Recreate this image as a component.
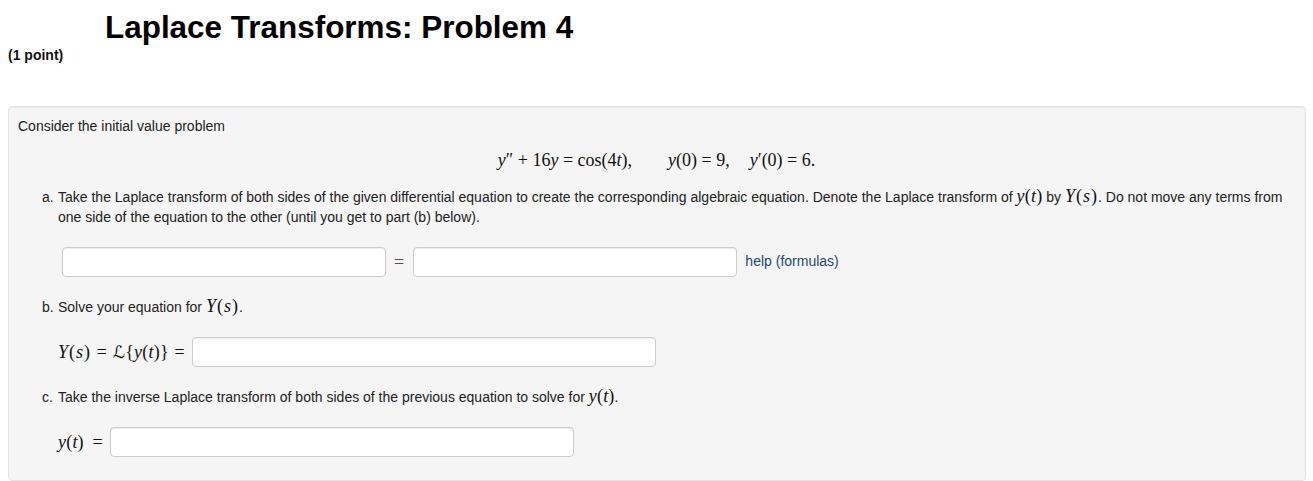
<div class="page">
  <h1>Laplace Transforms: Problem 4</h1>
  <p class="points">(1 point)</p>

  <div class="well">
    <p class="intro">Consider the initial value problem</p>
    <div class="display math">
      <span><i>y</i>″ + 16<i>y</i> = cos(4<i>t</i>),</span>
      <span class="gap-a"><i>y</i>(0) = 9,</span>
      <span class="gap-b"><i>y</i>′(0) = 6.</span>
    </div>

    <div class="part first">
      <span class="marker">a.</span>
      <p>Take the Laplace transform of both sides of the given differential equation to create the corresponding algebraic equation. Denote the Laplace transform of <span class="math"><i>y</i>(<i>t</i>)</span> by <span class="math big"><i>Y</i>(<i>s</i>)</span>. Do not move any terms from one side of the equation to the other (until you get to part (b) below).</p>
    </div>
    <div class="answer row-a">
      <input class="short" type="text" />
      <span class="math eq">=</span>
      <input class="short" type="text" />
      <a href="#help" class="help">help (formulas)</a>
    </div>

    <div class="part">
      <span class="marker">b.</span>
      <p>Solve your equation for <span class="math big"><i>Y</i>(<i>s</i>)</span>.</p>
    </div>
    <div class="answer">
      <span class="math label"><span class="big"><i>Y</i>(<i>s</i>)</span> = <span class="script">ℒ</span>{'{'}<i>y</i>(<i>t</i>){'}'} =</span>
      <input class="long" type="text" />
    </div>

    <div class="part">
      <span class="marker">c.</span>
      <p>Take the inverse Laplace transform of both sides of the previous equation to solve for <span class="math"><i>y</i>(<i>t</i>)</span>.</p>
    </div>
    <div class="answer">
      <span class="math label label-y"><i>y</i>(<i>t</i>) =</span>
      <input class="long" type="text" />
    </div>
  </div>
</div>

<style>
  :global(body) {
    margin: 0;
    background: #fff;
  }

  .page {
    font-family: "Liberation Sans", Arial, sans-serif;
    font-size: 14px;
    line-height: 20px;
    color: #222;
    padding: 0 7px 0 8px;
    height: 481px;
    overflow: hidden;
    box-sizing: border-box;
  }

  h1 {
    margin: 0 0 0 97px;
    padding-top: 8px;
    font-size: 31.45px;
    line-height: 40px;
    color: #000;
  }

  .points {
    margin: -3px 0 0;
    font-weight: bold;
    color: #111;
  }

  .well {
    margin-top: 41px;
    height: 375px;
    box-sizing: border-box;
    padding: 9px 9px;
    background: #f5f5f5;
    border: 1px solid #e3e3e3;
    border-radius: 4px;
    box-shadow: inset 0 1px 1px rgba(0, 0, 0, 0.05);
  }

  p {
    margin: 0;
  }

  .math {
    font-family: "Liberation Serif", "Times New Roman", serif;
    font-size: 18px;
    line-height: 0;
    color: #111;
    letter-spacing: 0.2px;
  }

  .big {
    letter-spacing: 1px;
  }

  .display {
    display: flex;
    justify-content: center;
    margin-top: 14px;
    height: 20px;
    line-height: 20px;
    padding-right: 1px;
    letter-spacing: 0;
  }

  .gap-a {
    margin-left: 36px;
  }

  .gap-b {
    margin-left: 20px;
  }

  .part {
    display: flex;
    margin: 20px 0 0 24px;
  }

  .part.first {
    margin-top: 17px;
  }

  .marker {
    width: 16px;
    flex: none;
  }

  .answer {
    display: flex;
    align-items: center;
    gap: 7px;
    margin: 20px 0 0 40px;
    height: 30px;
  }

  .label {
    line-height: 20px;
    word-spacing: 1px;
  }

  .label-y {
    word-spacing: 4px;
  }

  .row-a {
    margin-left: 44px;
    gap: 8px;
  }

  input {
    box-sizing: border-box;
    height: 30px;
    background: #fff;
    border: 1px solid #ccc;
    border-radius: 4px;
    box-shadow: inset 0 1px 1px rgba(0, 0, 0, 0.075);
    padding: 4px 6px;
    margin: 0;
  }

  .short {
    width: 324px;
  }

  .long {
    width: 464px;
  }

  .eq {
    color: #555;
    margin-right: 1px;
  }

  .help {
    color: #1c4a6e;
    text-decoration: none;
    margin-top: -2px;
  }

  .script {
    font-family: "DejaVu Sans", serif;
    font-size: 17px;
  }
</style>
